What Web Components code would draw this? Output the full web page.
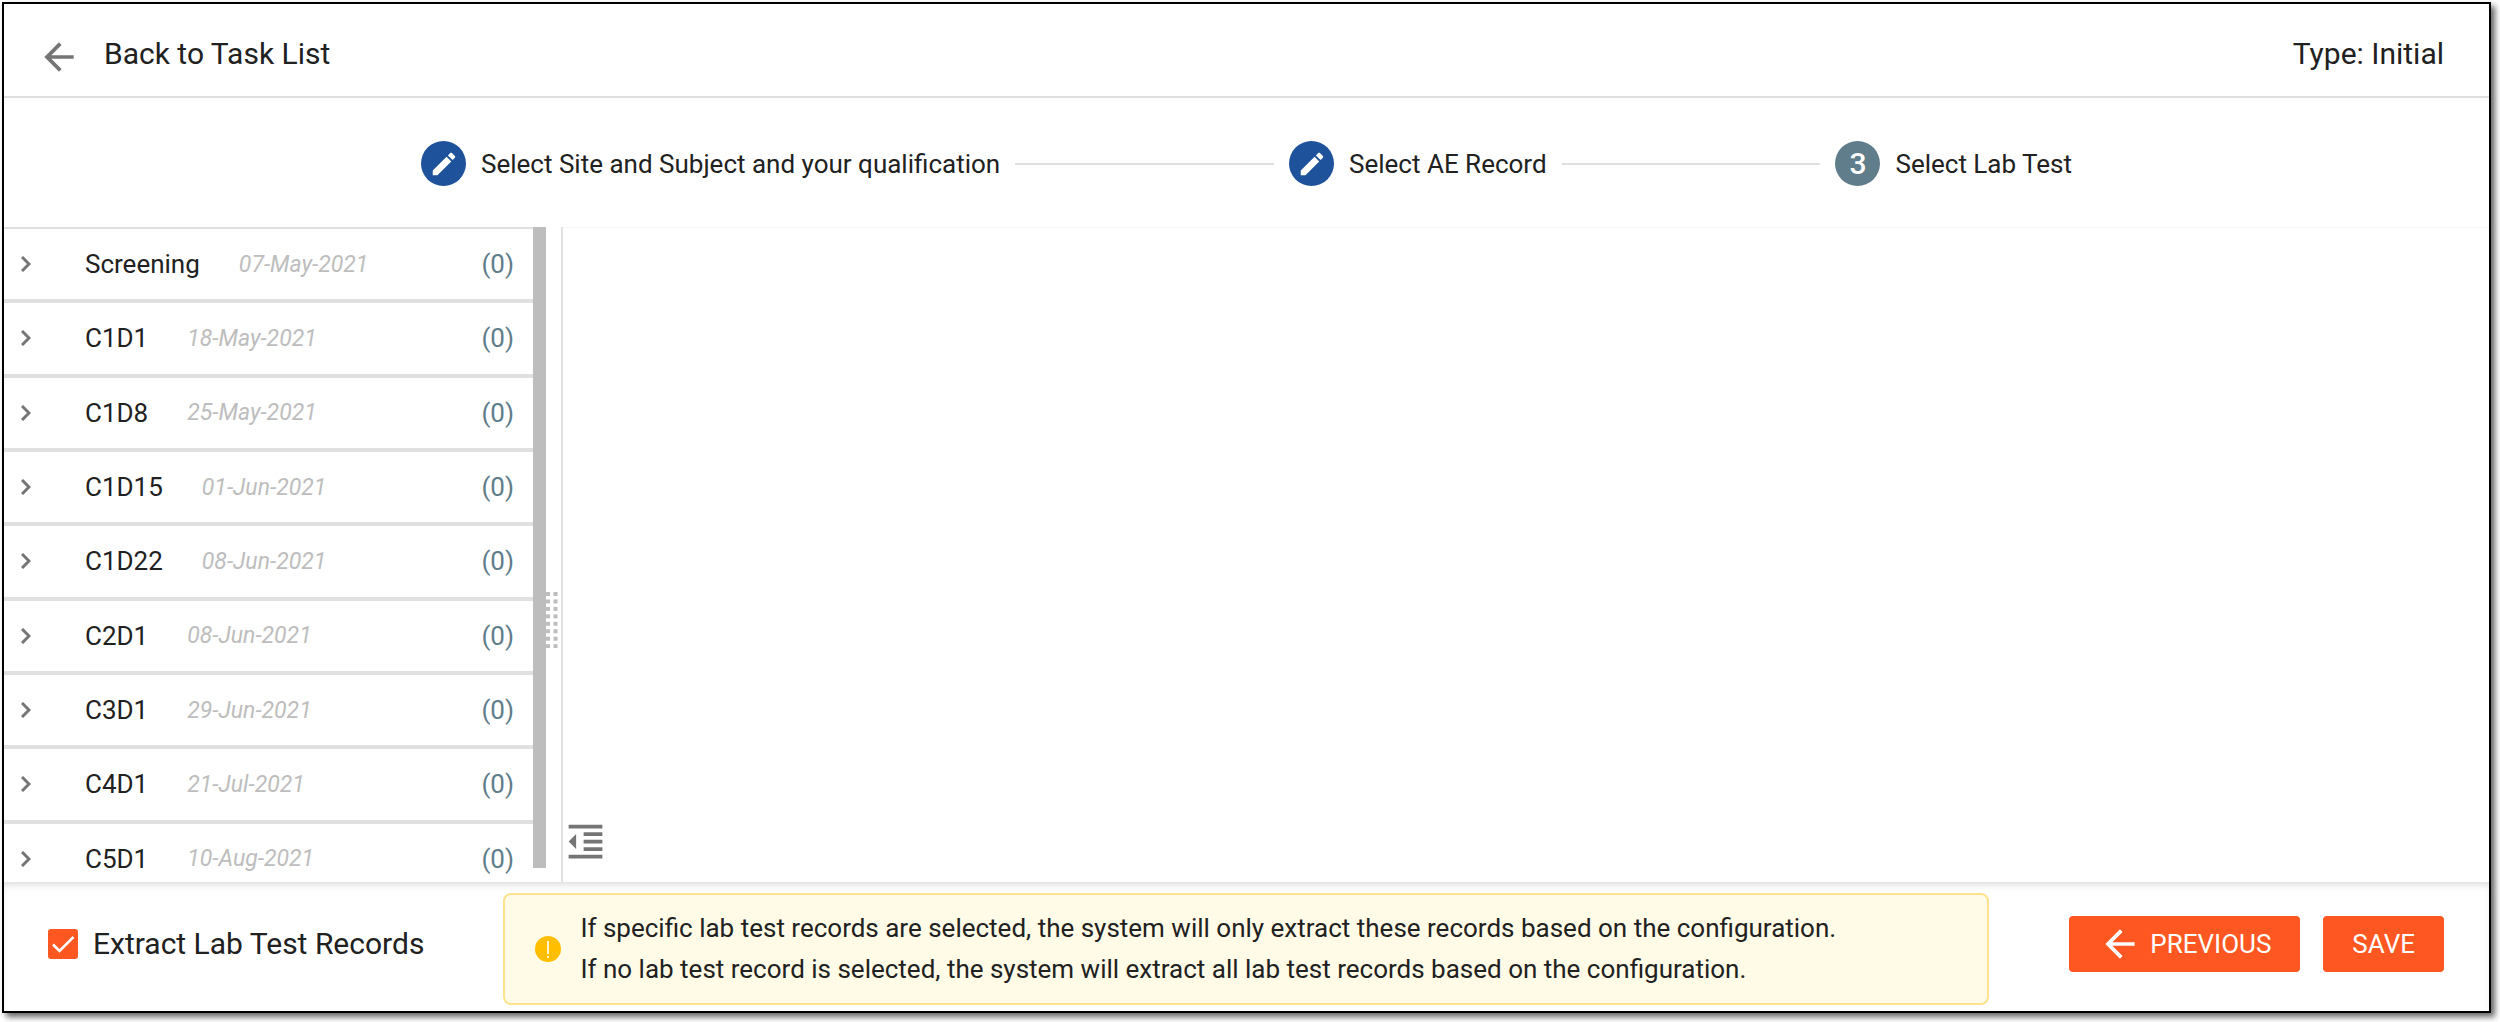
<!DOCTYPE html>
<html lang="en">
<head>
<meta charset="utf-8">
<title>Select Lab Test</title>
<style>
body {
    margin: 0;
    background-color: white;
    color: #212121;
    font-family: Roboto, "Liberation Sans", sans-serif;
    font-size: 26px;
}
</style>
</head>
<body>
<task-page>
    <task-header slot="header" title-text="Back to Task List" type="Initial"></task-header>
    <step-bar slot="steps"></step-bar>
    <visit-panel slot="visits"></visit-panel>
    <detail-pane slot="detail"></detail-pane>
    <task-footer slot="footer">
        <check-field slot="option">Extract Lab Test Records</check-field>
        <info-alert slot="info">
            <div>If specific lab test records are selected, the system will only extract these records based on the configuration.</div>
            <div>If no lab test record is selected, the system will extract all lab test records based on the configuration.</div>
        </info-alert>
        <action-button slot="actions" icon="back">PREVIOUS</action-button>
        <action-button slot="actions">SAVE</action-button>
    </task-footer>
</task-page>

<script>
const ARROW = 'M20 11H7.83l5.59-5.59L12 4l-8 8 8 8 1.41-1.41L7.83 13H20v-2z';
const PENCIL = 'M3 17.25V21h3.75L17.81 9.94l-3.75-3.75L3 17.25zM20.71 7.04c.39-.39.39-1.02 0-1.41l-2.34-2.34c-.39-.39-1.02-.39-1.41 0l-1.83 1.83 3.75 3.75 1.83-1.83z';

class TaskPage extends HTMLElement {
    constructor(){
        super();
        this.attachShadow({mode: 'open'}).innerHTML = `
        <style>
        :host {
            display: flex;
            flex-direction: column;
            box-sizing: border-box;
            height: calc(100vh - 11px);
            margin: 2px 9px 9px 2px;
            border: 2px solid black;
            box-shadow: 4px 4px 6px rgba(0, 0, 0, 0.6);
        }
        main {
            display: flex;
            flex: 1;
            min-height: 0;
        }
        slot[name="detail"]::slotted(*) {
            flex: 1;
        }
        </style>
        <slot name="header"></slot>
        <slot name="steps"></slot>
        <main>
            <slot name="visits"></slot>
            <slot name="detail"></slot>
        </main>
        <slot name="footer"></slot>
        `;
    }
}

class TaskHeader extends HTMLElement {
    constructor(){
        super();
        this.attachShadow({mode: 'open'});
    }

    connectedCallback(){
        this.shadowRoot.innerHTML = `
        <style>
        :host {
            display: block;
        }
        header {
            display: flex;
            justify-content: space-between;
            align-items: flex-start;
            padding: 31px 45px 17px 33px;
            border-bottom: 2px solid #e0e0e0;
            font-size: 30px;
            line-height: 38px;
        }
        a {
            display: flex;
            gap: 23px;
            color: inherit;
            text-decoration: none;
        }
        svg {
            width: 44px;
            height: 44px;
            fill: #757575;
        }
        </style>
        <header>
            <a href="#">
                <svg viewBox="0 0 24 24" aria-hidden="true"><path d="${ARROW}"/></svg>
                <span>${this.getAttribute('title-text')}</span>
            </a>
            <span>Type: ${this.getAttribute('type')}</span>
        </header>
        `;
    }
}

class StepBar extends HTMLElement {
    constructor(){
        super();
        this.attachShadow({mode: 'open'});
        this.steps = [
            {label: 'Select Site and Subject and your qualification', done: true},
            {label: 'Select AE Record', done: true},
            {label: 'Select Lab Test', done: false}
        ];
    }

    connectedCallback(){
        const edit = `<svg viewBox="0 0 24 24" aria-hidden="true"><path d="${PENCIL}"/></svg>`;
        this.shadowRoot.innerHTML = `
        <style>
        :host {
            display: block;
        }
        ol {
            display: flex;
            align-items: center;
            gap: 15px;
            margin: 0;
            padding: 43px 417px 41px;
            list-style: none;
        }
        li {
            display: flex;
            align-items: center;
            gap: 15px;
        }
        .line {
            flex: 1;
            height: 2px;
            background-color: #e0e0e0;
        }
        .dot {
            display: flex;
            align-items: center;
            justify-content: center;
            width: 45px;
            height: 45px;
            border-radius: 50%;
            background-color: #607d8b;
            color: white;
            font-size: 30px;
            font-weight: 500;
        }
        .dot.done {
            background-color: #1e529b;
        }
        svg {
            width: 30px;
            height: 30px;
            fill: white;
        }
        </style>
        <ol>
            ${this.steps.map((step, i) => `
            ${i ? '<li class="line" role="presentation"></li>' : ''}
            <li>
                <span class="dot ${step.done ? 'done' : ''}">${step.done ? edit : i + 1}</span>
                <span>${step.label}</span>
            </li>`).join('')}
        </ol>
        `;
    }
}

class VisitRow extends HTMLElement {
    constructor(){
        super();
        this.attachShadow({mode: 'open'});
    }

    connectedCallback(){
        this.shadowRoot.innerHTML = `
        <style>
        :host {
            display: flex;
        }
        button {
            display: flex;
            align-items: center;
            flex: 1;
            padding: 0 19px 0 17px;
            border: none;
            border-bottom: 4px solid #e0e0e0;
            background: none;
            color: inherit;
            font: inherit;
            text-align: left;
            cursor: pointer;
        }
        svg {
            width: 10px;
            height: 16px;
            margin-right: 54px;
            fill: none;
            stroke: #757575;
            stroke-width: 3;
        }
        .date {
            flex: 1;
            margin-left: 39px;
            color: #bdbdbd;
            font-size: 23px;
            font-style: italic;
        }
        .count {
            color: #607d8b;
        }
        </style>
        <button type="button" aria-expanded="false">
            <svg viewBox="0 0 10 16" aria-hidden="true"><path d="M1 1l7 7-7 7"/></svg>
            <span>${this.getAttribute('name')}</span>
            <span class="date">${this.getAttribute('date')}</span>
            <span class="count">(${this.getAttribute('count')})</span>
        </button>
        `;
    }
}

class VisitPanel extends HTMLElement {
    constructor(){
        super();
        this.attachShadow({mode: 'open'});
        this.visits = [
            ['Screening', '07-May-2021'],
            ['C1D1', '18-May-2021'],
            ['C1D8', '25-May-2021'],
            ['C1D15', '01-Jun-2021'],
            ['C1D22', '08-Jun-2021'],
            ['C2D1', '08-Jun-2021'],
            ['C3D1', '29-Jun-2021'],
            ['C4D1', '21-Jul-2021'],
            ['C5D1', '10-Aug-2021']
        ];
    }

    connectedCallback(){
        let dots = '';
        for (let i = 0; i < 8; i++) {
            dots += `<rect x="0" y="${i * 7.45}" width="4" height="4"/><rect x="7.5" y="${i * 7.45}" width="4" height="4"/>`;
        }
        this.shadowRoot.innerHTML = `
        <style>
        :host {
            display: flex;
        }
        .list {
            width: 529px;
            overflow: hidden;
            border-top: 2px solid #e0e0e0;
            box-sizing: border-box;
        }
        .rows {
            display: grid;
            grid-auto-rows: 1fr;
            height: 669px;
        }
        .bar {
            width: 13px;
            margin-bottom: 14px;
            background-color: #bdbdbd;
        }
        .grip {
            display: flex;
            align-items: center;
            width: 15px;
            padding-top: 130px;
            border-right: 2px solid #e0e0e0;
        }
        .grip svg {
            width: 12px;
            height: 56px;
            fill: #bdbdbd;
        }
        </style>
        <div class="list">
            <div class="rows">
                ${this.visits.map(v => `<visit-row name="${v[0]}" date="${v[1]}" count="0"></visit-row>`).join('')}
            </div>
        </div>
        <div class="bar"></div>
        <div class="grip"><svg viewBox="0 0 12 56" aria-hidden="true">${dots}</svg></div>
        `;
    }
}

class DetailPane extends HTMLElement {
    constructor(){
        super();
        this.attachShadow({mode: 'open'}).innerHTML = `
        <style>
        :host {
            display: flex;
            align-items: flex-end;
            box-shadow: inset 0 1px #f5f5f5;
        }
        button {
            display: flex;
            margin-bottom: 18px;
            padding: 0;
            border: none;
            background: none;
            cursor: pointer;
        }
        svg {
            width: 45px;
            height: 45px;
            fill: #757575;
        }
        </style>
        <button type="button" aria-label="Collapse">
            <svg viewBox="0 0 24 24"><path d="M11 17h10v-2H11v2zm-8-5l4 4V8l-4 4zm0 9h18v-2H3v2zM3 3v2h18V3H3zm8 6h10V7H11v2zm0 4h10v-2H11v2z"/></svg>
        </button>
        `;
    }
}

class TaskFooter extends HTMLElement {
    constructor(){
        super();
        this.attachShadow({mode: 'open'}).innerHTML = `
        <style>
        :host {
            display: block;
        }
        footer {
            display: flex;
            align-items: flex-start;
            padding: 11px 45px 6px 44px;
            box-shadow: inset 0 6px 8px -4px rgba(0, 0, 0, 0.16);
        }
        .option {
            flex: none;
            margin-top: 23px;
        }
        .actions {
            display: flex;
            gap: 23px;
            margin-top: 23px;
            margin-left: auto;
        }
        slot[name="info"]::slotted(*) {
            flex: 0 1 1486px;
            margin-left: 79px;
            margin-right: 40px;
        }
        </style>
        <footer>
            <div class="option"><slot name="option"></slot></div>
            <slot name="info"></slot>
            <div class="actions"><slot name="actions"></slot></div>
        </footer>
        `;
    }
}

class CheckField extends HTMLElement {
    constructor(){
        super();
        this.attachShadow({mode: 'open'}).innerHTML = `
        <style>
        :host {
            display: block;
            font-size: 30px;
            line-height: 56px;
        }
        label {
            display: flex;
            align-items: center;
            gap: 15px;
        }
        .box {
            display: grid;
            width: 30px;
            height: 30px;
        }
        input, svg {
            grid-area: 1 / 1;
            width: 30px;
            height: 30px;
            margin: 0;
        }
        input {
            appearance: none;
            border: 3px solid #757575;
            border-radius: 3px;
        }
        input:checked {
            border-color: #ff5722;
            background-color: #ff5722;
        }
        svg {
            fill: none;
            stroke: white;
            stroke-width: 2.5;
            pointer-events: none;
        }
        </style>
        <label>
            <span class="box">
                <input type="checkbox" checked>
                <svg viewBox="0 0 30 30" aria-hidden="true"><path d="M5 15.5l6.500 6.500L25.500 8"/></svg>
            </span>
            <span><slot></slot></span>
        </label>
        `;
    }
}

class InfoAlert extends HTMLElement {
    constructor(){
        super();
        this.attachShadow({mode: 'open'}).innerHTML = `
        <style>
        :host {
            display: flex;
            align-items: center;
            gap: 19px;
            box-sizing: border-box;
            padding: 13px 30px;
            border: 2px solid #ffe28c;
            border-radius: 8px;
            background-color: #fffbe6;
            line-height: 41px;
        }
        svg {
            flex: none;
            width: 26px;
            height: 26px;
        }
        </style>
        <svg viewBox="0 0 26 26" aria-hidden="true">
            <circle cx="13" cy="13" r="13" fill="#ffbf00"/>
            <path d="M12.200 5h1.600v13h-1.600zM12.200 20h1.600v2h-1.600z" fill="white"/>
        </svg>
        <div role="status"><slot></slot></div>
        `;
    }
}

class ActionButton extends HTMLElement {
    constructor(){
        super();
        this.attachShadow({mode: 'open'});
    }

    connectedCallback(){
        const icon = this.getAttribute('icon') === 'back'
            ? `<svg viewBox="0 0 24 24" aria-hidden="true"><path d="${ARROW}"/></svg>` : '';
        this.shadowRoot.innerHTML = `
        <style>
        :host {
            display: block;
        }
        button {
            display: flex;
            align-items: center;
            gap: 8px;
            height: 56px;
            padding: 0 29px;
            border: none;
            border-radius: 4px;
            background-color: #ff5722;
            color: white;
            font: inherit;
            cursor: pointer;
        }
        svg {
            width: 44px;
            height: 44px;
            fill: white;
        }
        </style>
        <button type="button">${icon}<slot></slot></button>
        `;
    }
}

customElements.define('task-page', TaskPage);
customElements.define('task-header', TaskHeader);
customElements.define('step-bar', StepBar);
customElements.define('visit-row', VisitRow);
customElements.define('visit-panel', VisitPanel);
customElements.define('detail-pane', DetailPane);
customElements.define('task-footer', TaskFooter);
customElements.define('check-field', CheckField);
customElements.define('info-alert', InfoAlert);
customElements.define('action-button', ActionButton);
</script>
</body>
</html>
